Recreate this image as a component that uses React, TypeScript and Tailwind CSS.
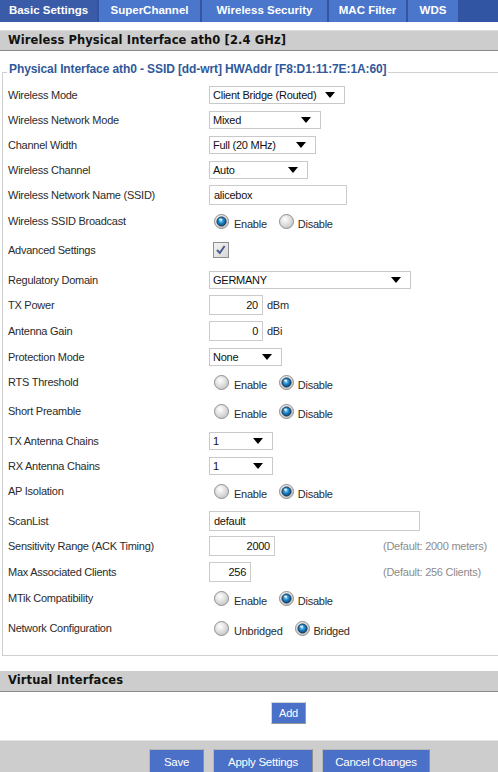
import React from 'react';

// Router web UI: wireless basic settings page

function Radio({ on }: { on?: boolean }) {
  return (
    <svg width="15" height="15" viewBox="0 0 15 15" className="mt-[4px] shrink-0">
      <defs>
        <radialGradient id="radioOff" cx="40%" cy="35%" r="70%">
          <stop offset="0" stopColor="#ffffff" />
          <stop offset="1" stopColor="#c4c4c4" />
        </radialGradient>
        <radialGradient id="radioOn" cx="45%" cy="40%" r="65%">
          <stop offset="0" stopColor="#9ddcff" />
          <stop offset="0.45" stopColor="#1c86c8" />
          <stop offset="1" stopColor="#0a3866" />
        </radialGradient>
      </defs>
      <circle cx="7.5" cy="7.5" r="7" fill="url(#radioOff)" stroke="#8f8f8f" />
      {on && (
        <>
          <circle cx="7.5" cy="7.5" r="4.6" fill="url(#radioOn)" stroke="#17324f" strokeWidth="0.9" />
          <ellipse cx="6.6" cy="5.6" rx="1.6" ry="1" fill="#ffffff" opacity="0.75" />
        </>
      )}
    </svg>
  );
}

function RadioPair({ a, b, first }: { a: string; b: string; first?: boolean }) {
  return (
    <div className="flex items-start pl-[5px]">
      <Radio on={first} />
      <span className="ml-[5px] mt-[7px] leading-[14px]">{a}</span>
      <span className="ml-[12px] flex items-start">
        <Radio on={!first} />
        <span className="ml-[4px] mt-[7px] leading-[14px]">{b}</span>
      </span>
    </div>
  );
}

function Select({ value, w }: { value: string; w: string }) {
  return (
    <div className={`mt-[2px] flex h-[18px] items-center justify-between border border-[#c9c9c9] bg-white pl-[3px] pr-[9px] ${w}`}>
      <span className="leading-[14px] text-[#111]">{value}</span>
      <svg width="10" height="6" viewBox="0 0 10 6">
        <polygon points="0,0 10,0 5,6" fill="#000" />
      </svg>
    </div>
  );
}

function Input({ value, w, right }: { value: string; w: string; right?: boolean }) {
  return (
    <div
      className={`mt-[1px] flex h-[20px] items-center border border-[#cbcbcb] bg-white px-[4px] leading-[14px] text-[#111] ${w} ${
        right ? 'justify-end' : ''
      }`}
    >
      {value}
    </div>
  );
}

function Row({ label, h, children }: { label: string; h: string; children?: React.ReactNode }) {
  return (
    <div className={`flex items-start ${h}`}>
      <div className="w-[206px] shrink-0 pl-[5px] pt-[4px] leading-[14px]">{label}</div>
      <div className="flex items-start">{children}</div>
    </div>
  );
}

function Hint({ children }: { children: React.ReactNode }) {
  return <span className="pt-[4px] leading-[14px] text-[#8c8c8c]">{children}</span>;
}

const tabs = [
  { name: 'Basic Settings', w: 'w-[97px]', active: true },
  { name: 'SuperChannel', w: 'w-[101px]' },
  { name: 'Wireless Security', w: 'w-[125px]' },
  { name: 'MAC Filter', w: 'w-[77px]' },
  { name: 'WDS', w: 'w-[50px]' },
];

export default function App() {
  return (
    <div className="min-h-[772px] overflow-hidden bg-white font-['Liberation_Sans',Arial,sans-serif] text-[11px] tracking-[-0.25px] text-[#2b2b2b]">
      {/* tab strip */}
      <div className="flex h-[22px] gap-[2px] bg-[#3155a3]">
        {tabs.map((t) => (
          <div
            key={t.name}
            className={`flex items-center justify-center text-[11.5px] font-bold tracking-normal text-white ${t.w} ${
              t.active ? 'bg-[#3a5ca8]' : 'bg-[#4a76cc]'
            }`}
          >
            {t.name}
          </div>
        ))}
      </div>

      <div className="mt-[8px] flex h-[21px] items-center border-t border-t-[#dedede] border-b border-b-[#8a8a8a] bg-[#cdcdcd] pl-[8px] font-['DejaVu_Sans',Verdana,sans-serif] text-[11.5px] font-bold tracking-[0.1px] text-[#111]">
        Wireless Physical Interface ath0 [2.4 GHz]
      </div>

      <fieldset className="ml-[2px] mt-[11px] border border-r-0 border-[#cfcfcf] pb-[8px]">
        <legend className="ml-[4px] px-[2px] pb-[6px] text-[12px] font-bold leading-[14px] tracking-[-0.1px] text-[#30599b]">
          Physical Interface ath0 - SSID [dd-wrt] HWAddr [F8:D1:11:7E:1A:60]
        </legend>
        <div className="pt-[2px]">
          <Row label="Wireless Mode" h="h-[25px]">
            <Select value="Client Bridge (Routed)" w="w-[136px]" />
          </Row>
          <Row label="Wireless Network Mode" h="h-[25px]">
            <Select value="Mixed" w="w-[112px]" />
          </Row>
          <Row label="Channel Width" h="h-[25px]">
            <Select value="Full (20 MHz)" w="w-[107px]" />
          </Row>
          <Row label="Wireless Channel" h="h-[25px]">
            <Select value="Auto" w="w-[99px]" />
          </Row>
          <Row label="Wireless Network Name (SSID)" h="h-[26px]">
            <Input value="alicebox" w="w-[138px]" />
          </Row>
          <Row label="Wireless SSID Broadcast" h="h-[29px]">
            <RadioPair a="Enable" b="Disable" first />
          </Row>
          <Row label="Advanced Settings" h="h-[30px]">
            <svg width="16" height="16" viewBox="0 0 16 16" className="ml-[4px] mt-[3px]">
              <defs>
                <linearGradient id="boxFill" x1="0" y1="0" x2="1" y2="1">
                  <stop offset="0" stopColor="#f4f4f4" />
                  <stop offset="1" stopColor="#d6d6d6" />
                </linearGradient>
              </defs>
              <rect x="0.5" y="0.5" width="15" height="15" fill="url(#boxFill)" stroke="#8e8e8e" />
              <path d="M4 8 L6.8 11 L11.6 4" fill="none" stroke="#4b5b8f" strokeWidth="2" />
            </svg>
          </Row>
          <Row label="Regulatory Domain" h="h-[25px]">
            <Select value="GERMANY" w="w-[202px]" />
          </Row>
          <Row label="TX Power" h="h-[26px]">
            <Input value="20" w="w-[54px]" right />
            <span className="ml-[4px] pt-[4px] leading-[14px]">dBm</span>
          </Row>
          <Row label="Antenna Gain" h="h-[26px]">
            <Input value="0" w="w-[54px]" right />
            <span className="ml-[4px] pt-[4px] leading-[14px]">dBi</span>
          </Row>
          <Row label="Protection Mode" h="h-[25px]">
            <Select value="None" w="w-[73px]" />
          </Row>
          <Row label="RTS Threshold" h="h-[29px]">
            <RadioPair a="Enable" b="Disable" />
          </Row>
          <Row label="Short Preamble" h="h-[30px]">
            <RadioPair a="Enable" b="Disable" />
          </Row>
          <Row label="TX Antenna Chains" h="h-[25px]">
            <Select value="1" w="w-[64px]" />
          </Row>
          <Row label="RX Antenna Chains" h="h-[25px]">
            <Select value="1" w="w-[64px]" />
          </Row>
          <Row label="AP Isolation" h="h-[30px]">
            <RadioPair a="Enable" b="Disable" />
          </Row>
          <Row label="ScanList" h="h-[25px]">
            <Input value="default" w="w-[211px]" />
          </Row>
          <Row label="Sensitivity Range (ACK Timing)" h="h-[26px]">
            <div className="w-[174px]">
              <Input value="2000" w="w-[66px]" right />
            </div>
            <Hint>(Default: 2000 meters)</Hint>
          </Row>
          <Row label="Max Associated Clients" h="h-[26px]">
            <div className="w-[174px]">
              <Input value="256" w="w-[42px]" right />
            </div>
            <Hint>(Default: 256 Clients)</Hint>
          </Row>
          <Row label="MTik Compatibility" h="h-[30px]">
            <RadioPair a="Enable" b="Disable" />
          </Row>
          <Row label="Network Configuration" h="h-[30px]">
            <RadioPair a="Unbridged" b="Bridged" />
          </Row>
        </div>
      </fieldset>

      <div className="mt-[15px] flex h-[21px] items-center border-b border-b-[#8a8a8a] bg-[#cdcdcd] pl-[8px] font-['DejaVu_Sans',Verdana,sans-serif] text-[11.5px] font-bold tracking-[0.1px] text-[#111]">
        Virtual Interfaces
      </div>

      <div className="flex pl-[271px] pt-[10px]">
        <button className="h-[22px] w-[35px] border border-[#d8d8d8] border-r-[#9a9a9a] border-b-[#9a9a9a] bg-[#4a70c8] text-white">
          Add
        </button>
      </div>

      <div className="mt-[16px] flex h-[40px] gap-[9px] border-t border-t-[#e4e4e4] bg-[#cdcdcd] pl-[149px] pt-[8px]">
        {[
          ['Save', 'w-[55px]'],
          ['Apply Settings', 'w-[100px]'],
          ['Cancel Changes', 'w-[108px]'],
        ].map(([label, w]) => (
          <button
            key={label}
            className={`h-[28px] border border-[#b8b8b8] border-r-[#8e8e8e] bg-[#4a70c8] text-[11.5px] text-white ${w}`}
          >
            {label}
          </button>
        ))}
      </div>
    </div>
  );
}
